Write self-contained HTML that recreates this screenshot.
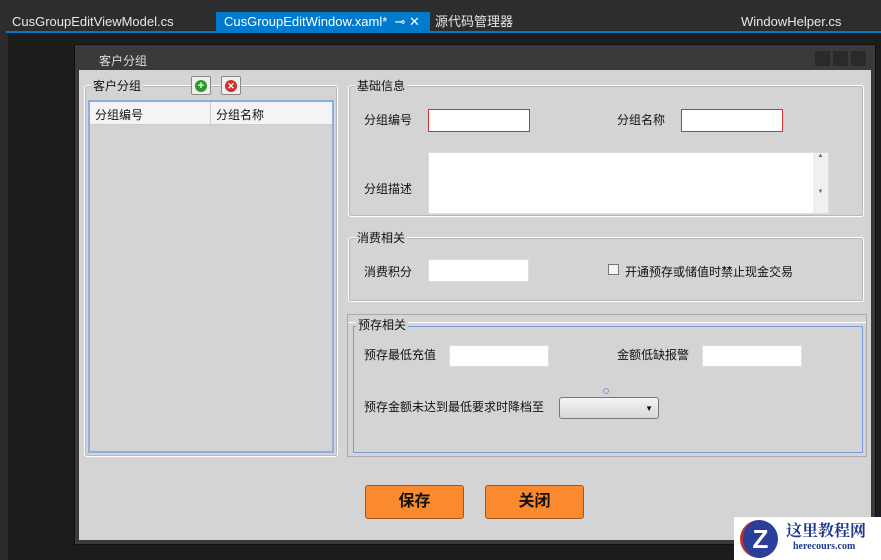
<!DOCTYPE html>
<html><head><meta charset="utf-8"><style>
*{margin:0;padding:0;box-sizing:border-box}
body{width:881px;height:560px;background:#2b2b2e;position:relative;overflow:hidden;font-family:"Liberation Sans","Noto Sans CJK SC",sans-serif;font-size:12px;color:#111}
.a{position:absolute}
.tab{position:absolute;top:12px;height:20px;line-height:20px;color:#e8e8e8;font-size:13px;padding-left:8px}
.gb{position:absolute;border:1px solid #fff;box-shadow:0 0 0 1px #b8b8b8 inset;border-radius:3px}
.lg{position:absolute;background:#d4d4d4;padding:0 2px;font-size:12px;top:-9px;left:6px}
.in{position:absolute;background:#fff;border:1px solid #ddd}
.rd{border:1px solid #d03030}
.lb{position:absolute;font-size:12px}
.btn{position:absolute;width:99px;height:34px;background:#fb8a2f;border:1px solid #a05a20;border-radius:3px;font-size:16px;font-weight:bold;text-align:center;line-height:32px}
</style></head><body>
<div class="a" style="left:0;top:0;width:881px;height:12px;background:#2d2d30"></div>
<div class="a" style="left:0;top:12px;width:881px;height:20px;background:#2d2d30"></div>
<div class="tab" style="left:4px">CusGroupEditViewModel.cs</div>
<div class="tab" style="left:216px;width:214px;background:#007acc;color:#fff">CusGroupEditWindow.xaml* &nbsp;⊸ ✕</div>
<div class="tab" style="left:427px">源代码管理器</div>
<div class="tab" style="left:733px">WindowHelper.cs</div>
<div class="a" style="left:6px;top:31px;width:875px;height:2px;background:#007acc"></div>
<div class="a" style="left:8px;top:33px;width:873px;height:527px;background:#1c1c1c"></div>
<div class="a" style="left:74px;top:44px;width:802px;height:501px;background:#3a3a3d;border:1px solid #111"></div>
<div class="a" style="left:99px;top:52px;color:#ddd;font-size:12px">客户分组</div>
<div class="a" style="left:815px;top:51px;width:15px;height:15px;background:#2a2a2c"></div>
<div class="a" style="left:833px;top:51px;width:15px;height:15px;background:#2a2a2c"></div>
<div class="a" style="left:851px;top:51px;width:15px;height:15px;background:#2a2a2c"></div>
<div class="a" style="left:79px;top:70px;width:792px;height:470px;background:#d4d4d4"></div>

<div class="gb" style="left:84px;top:85px;width:254px;height:372px"><div class="lg" style="top:-9px">客户分组</div></div>
<div class="a" style="left:191px;top:76px;width:20px;height:19px;background:#eee;border:1px solid #888;border-radius:2px"><div style="margin:3px;width:12px;height:12px;border-radius:6px;background:#2a9a2a;color:#fff;font-size:11px;line-height:12px;text-align:center;font-weight:bold">+</div></div>
<div class="a" style="left:221px;top:76px;width:20px;height:19px;background:#eee;border:1px solid #888;border-radius:2px"><div style="margin:3px;width:12px;height:12px;border-radius:6px;background:#d03030;color:#fff;font-size:9px;line-height:12px;text-align:center;font-weight:bold">✕</div></div>
<div class="a" style="left:88px;top:100px;width:246px;height:353px;border:2px solid #8ab0e0;background:#d4d4d4"></div>
<div class="a" style="left:90px;top:102px;width:242px;height:23px;background:#f4f4f4;border-bottom:1px solid #ccc"></div>
<div class="a" style="left:210px;top:102px;width:1px;height:23px;background:#ccc"></div>
<div class="lb" style="left:95px;top:106px">分组编号</div>
<div class="lb" style="left:216px;top:106px">分组名称</div>

<div class="gb" style="left:348px;top:85px;width:516px;height:132px"><div class="lg">基础信息</div></div>
<div class="lb" style="left:364px;top:111px">分组编号</div>
<div class="in rd" style="left:428px;top:109px;width:102px;height:23px"></div>
<div class="lb" style="left:617px;top:111px">分组名称</div>
<div class="in rd" style="left:681px;top:109px;width:102px;height:23px"></div>
<div class="lb" style="left:364px;top:180px">分组描述</div>
<div class="in" style="left:428px;top:152px;width:401px;height:62px"></div>
<div class="a" style="left:813px;top:153px;width:15px;height:60px;background:#f0f0f0;font-size:6px;color:#666;text-align:center">▲<br><br><br><br><br><br>▼</div>

<div class="gb" style="left:348px;top:237px;width:516px;height:65px"><div class="lg">消费相关</div></div>
<div class="lb" style="left:364px;top:263px">消费积分</div>
<div class="in" style="left:428px;top:259px;width:101px;height:23px"></div>
<div class="a" style="left:608px;top:264px;width:11px;height:11px;border:1px solid #777;background:#f4f4f4"></div>
<div class="lb" style="left:625px;top:263px">开通预存或储值时禁止现金交易</div>

<div class="a" style="left:347px;top:314px;width:520px;height:143px;border:1px solid #aaa"></div>
<div class="a" style="left:348px;top:322px;width:518px;height:1px;background:#fff"></div>
<div class="a" style="left:353px;top:326px;width:510px;height:127px;border:1px solid #7a9ad8"></div>
<div class="lb" style="left:356px;top:316px;background:#d4d4d4;padding:0 2px">预存相关</div>
<div class="lb" style="left:364px;top:346px">预存最低充值</div>
<div class="in" style="left:449px;top:345px;width:100px;height:22px"></div>
<div class="lb" style="left:617px;top:346px">金额低缺报警</div>
<div class="in" style="left:702px;top:345px;width:100px;height:22px"></div>
<div class="lb" style="left:364px;top:398px">预存金额未达到最低要求时降档至</div>
<div class="a" style="left:559px;top:397px;width:100px;height:22px;border:1px solid #777;border-radius:3px;background:linear-gradient(#f4f4f4,#d8d8d8);font-size:8px;text-align:right;padding:6px 5px 0 0">▼</div>
<div class="a" style="left:603px;top:388px;width:6px;height:6px;border:1px solid #7a9ad8;border-radius:3px"></div>

<div class="btn" style="left:365px;top:485px">保存</div>
<div class="btn" style="left:485px;top:485px">关闭</div>

<div class="a" style="left:734px;top:517px;width:147px;height:43px;background:#fff"></div>
<div class="a" style="left:740px;top:520px;width:38px;height:38px;border-radius:19px;background:#2a3f9a;color:#fff;font-weight:bold;font-size:26px;text-align:center;line-height:38px;border-left:3px solid #c03030">Z</div>
<div class="a" style="left:786px;top:518px;font-family:'Noto Serif CJK SC',serif;font-weight:bold;font-size:16px;color:#1e3a8a">这里教程网</div>
<div class="a" style="left:793px;top:541px;font-family:'Liberation Serif',serif;font-weight:bold;font-size:10px;color:#1e3a8a">herecours.com</div>
</body></html>
